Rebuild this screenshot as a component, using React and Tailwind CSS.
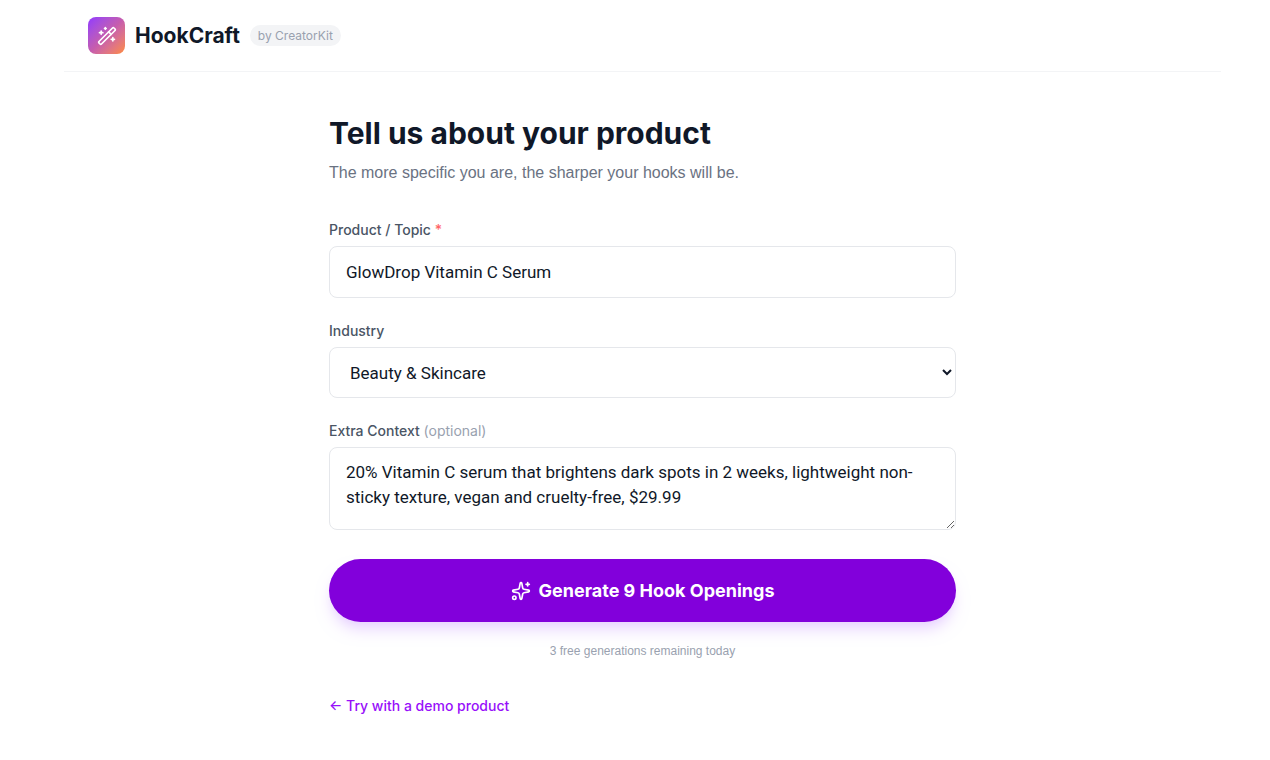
import React, { useState } from 'react';
import { Sparkles, WandSparkles } from 'lucide-react';

const INDUSTRIES = [
  'Beauty & Skincare',
  'Health & Fitness',
  'Food & Beverage',
  'Fashion',
  'Technology',
  'Education',
];

const DEMO_PRODUCT = {
  topic: 'GlowDrop Vitamin C Serum',
  industry: 'Beauty & Skincare',
  context:
    '20% Vitamin C serum that brightens dark spots in 2 weeks, lightweight non-sticky texture, vegan and cruelty-free, $29.99',
};

const labelClass = 'mb-1.5 block text-sm leading-[21px] font-medium text-gray-600';
const fieldClass =
  "block w-full rounded-lg border border-gray-200 bg-white px-4 font-['Roboto',sans-serif] text-[17px] leading-[25px] text-gray-900 outline-none focus:border-purple-500";

const Header = () => (
  <header className="mx-auto flex w-full max-w-[1157px] items-center gap-2.5 border-b border-gray-100 px-6 py-[17px]">
    <div className="flex size-[37px] items-center justify-center rounded-lg bg-linear-to-br from-[#9333ff] via-[#c65cae] to-[#ff8a33] text-white">
      <WandSparkles size={20} />
    </div>
    <span className="text-[21px] leading-7 font-bold text-gray-900">HookCraft</span>
    <span className="rounded-full bg-gray-100 px-2 py-0.5 text-xs leading-[17px] text-gray-400">by CreatorKit</span>
  </header>
);

const ProductForm = () => {
  const [form, setForm] = useState(DEMO_PRODUCT);

  const handleChange = (e) => {
    const { name, value } = e.target;
    setForm(prev => ({ ...prev, [name]: value }));
  };

  return (
    <form onSubmit={(e) => e.preventDefault()}>
      <div className="mb-[22px]">
        <label htmlFor="topic" className={labelClass}>
          Product / Topic <span className="text-red-400">*</span>
        </label>
        <input
          id="topic"
          name="topic"
          type="text"
          value={form.topic}
          onChange={handleChange}
          className={`${fieldClass} h-[52px]`}
        />
      </div>

      <div className="mb-[22px]">
        <label htmlFor="industry" className={labelClass}>
          Industry
        </label>
        <select
          id="industry"
          name="industry"
          value={form.industry}
          onChange={handleChange}
          className={`${fieldClass} h-[51px]`}
        >
          {INDUSTRIES.map((industry) => (
            <option key={industry}>{industry}</option>
          ))}
        </select>
      </div>

      <div className="mb-[29px]">
        <label htmlFor="context" className={labelClass}>
          Extra Context <span className="font-normal text-gray-400">(optional)</span>
        </label>
        <textarea
          id="context"
          name="context"
          rows={2}
          value={form.context}
          onChange={handleChange}
          className={`${fieldClass} h-[83px] resize-y py-3`}
        />
      </div>

      <button
        type="submit"
        className="flex h-[63px] w-full items-center justify-center gap-2 rounded-full bg-[#8200db] text-lg font-bold text-white shadow-lg shadow-purple-200"
      >
        <Sparkles size={20} />
        Generate 9 Hook Openings
      </button>
    </form>
  );
};

const App = () => {
  return (
    <div className="min-h-screen bg-white pl-[15px] font-['Inter','Liberation_Sans',sans-serif] text-gray-900">
      <Header />
      <main className="mx-auto w-full max-w-[627px] py-[42px]">
        <h1 className="mb-2 text-3xl leading-[38px] font-bold">Tell us about your product</h1>
        <p className="mb-[34px] font-['Liberation_Sans',sans-serif] text-base leading-[25px] text-gray-500">
          The more specific you are, the sharper your hooks will be.
        </p>
        <ProductForm />
        <p className="mt-[21px] text-center font-['Liberation_Sans',sans-serif] text-xs leading-[17px] text-gray-400">
          3 free generations remaining today
        </p>
        <a href="#demo" className="mt-[35px] inline-block text-sm leading-[21px] font-medium text-purple-600">
          ← Try with a demo product
        </a>
      </main>
    </div>
  );
};

export default App;
